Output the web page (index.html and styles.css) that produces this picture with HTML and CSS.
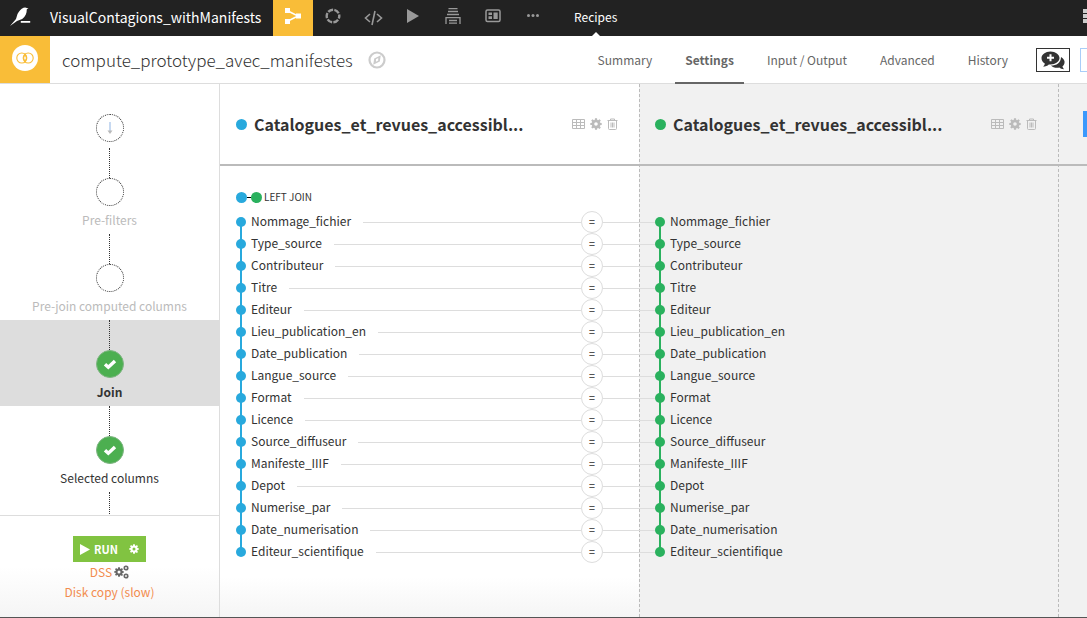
FILE: index.html
```html
<!DOCTYPE html>
<html lang="en">
<head>
<meta charset="utf-8">
<title>compute_prototype_avec_manifestes</title>
<link rel="stylesheet" href="styles.css">
</head>
<body>
<svg class="sprite" aria-hidden="true">
  <symbol id="i-gear" viewBox="0 0 12 12"><path fill-rule="evenodd" d="M5 .3h2l.3 1.6.8.4 1.4-1 1.3 1.3-1 1.4.4.8 1.5.3v1.9l-1.5.3-.4.9 1 1.3-1.3 1.4-1.4-.9-.8.3L7 11.7H5l-.3-1.7-.8-.3-1.4.9-1.3-1.4 1-1.3-.4-.9L.3 7V5.100l1.500-.3.4-.8-1-1.400L2.500 1.300l1.400 1 .8-.4zM6 4.200a1.800 1.800 0 1 0 0 3.600 1.800 1.800 0 0 0 0-3.600z"/></symbol>
  <symbol id="i-table" viewBox="0 0 13 12"><path d="M.5 1.500h12v9H.5zM.5 4.500h12M.5 7.500h12M4.500 1.500v9M8.500 1.500v9" fill="none" stroke="currentColor"/></symbol>
  <symbol id="i-trash" viewBox="0 0 11 12"><path d="M.5 2.500h10M3.500 2.500v-1.500h4v1.500M1.500 2.500v8q0 1 1 1h6q1 0 1-1v-8M4 4.500v5M5.500 4.500v5M7 4.500v5" fill="none" stroke="currentColor"/></symbol>
  <symbol id="i-check" viewBox="0 0 14 14"><path d="M2 7.300l3.300 3 6.700-6.300" fill="none" stroke="#fff" stroke-width="3.400"/></symbol>
</svg>
<div class="app">
  <header class="topbar">
    <a class="logo" href="#" aria-label="Home"><svg width="21" height="20" viewBox="0 0 21 20" fill="#fff"><path d="M0 19l6-7 1.500-5C9 4 11 2 13.500.8q2-.8 3.300.2l1.700.4-1.700.9c0 4-1.300 7.500-4.600 9.700L7 14zM10.800 14h9.400v1.800h-9.400z"/></svg></a>
    <a class="project" href="#">VisualContagions_withManifests</a>
    <nav class="tools" aria-label="Project">
      <a class="tool tool-on" href="#" aria-label="Flow"><svg width="16" height="16" viewBox="0 0 16 16" fill="#fff"><path d="M0 0h5v5H0zM0 11h5v5H0zM11 5.500h5v5h-5z"/><path d="M3 3l10 5-10 5" fill="none" stroke="#fff" stroke-width="1.500"/></svg></a>
      <a class="tool" href="#" aria-label="Lab"><svg width="16" height="16" viewBox="0 0 16 16"><circle cx="8" cy="8" r="6.300" fill="none" stroke="currentColor" stroke-width="2.400" stroke-dasharray="5.300 1.298" stroke-dashoffset="2.650"/></svg></a>
      <a class="tool" href="#" aria-label="Code"><svg class="low" width="19" height="16" viewBox="0 0 19 16" fill="none" stroke="currentColor" stroke-width="1.600"><path d="M6 4L1.500 8 6 12M13 4l4.500 4-4.500 4M11 1L8 15"/></svg></a>
      <a class="tool" href="#" aria-label="Run"><svg width="12" height="16" viewBox="0 0 12 16" fill="currentColor"><path d="M0 1l12 7-12 7z"/></svg></a>
      <a class="tool" href="#" aria-label="Jobs"><svg width="16" height="16" viewBox="0 0 16 16" fill="none" stroke="currentColor" stroke-width="1.300"><path d="M3.500.700h9M3 3.500h10M2 6.500h12M1 16v-6.300h14V16M4 12.500h8M4 15.200h8"/></svg></a>
      <a class="tool" href="#" aria-label="Dashboards"><svg width="16" height="16" viewBox="0 0 16 16"><rect x="1" y="2" width="14" height="11.500" rx="1.500" fill="none" stroke="currentColor" stroke-width="1.500"/><path d="M3.500 4.500H7v2.400H3.500zM3.500 8.300H7v2.700H3.500zM8.500 4.500h4.200V11H8.500z" fill="currentColor"/></svg></a>
      <a class="tool" href="#" aria-label="More"><svg width="14" height="16" viewBox="0 0 14 16" fill="currentColor"><circle cx="2.500" cy="7.500" r="1.500"/><circle cx="7" cy="7.500" r="1.500"/><circle cx="11.500" cy="7.500" r="1.500"/></svg></a>
    </nav>
    <a class="section" href="#">Recipes</a>
    <button class="apps" aria-label="Applications"><svg width="4" height="14" viewBox="0 0 4 14" fill="#ccc"><path d="M0 0h4v4H0zM0 5h4v4H0zM0 10h4v4H0z"/></svg></button>
  </header>

  <div class="titlebar">
    <div class="kind"><svg width="26" height="26" viewBox="0 0 26 26"><circle cx="13" cy="13" r="13" fill="#fff"/><g fill="none" stroke="#f9bd38" stroke-width="1.100"><circle cx="9.800" cy="13" r="5"/><circle cx="16.200" cy="13" r="5"/><path d="M13 9.300l1.500 3.700-1.500 3.700-1.500-3.700z"/></g></svg></div>
    <h1 class="title">compute_prototype_avec_manifestes</h1>
    <svg class="compass" width="18" height="18" viewBox="0 0 18 18"><circle cx="9" cy="9" r="7.500" fill="none" stroke="#ccc" stroke-width="2.200"/><path d="M12.800 4.300L11.800 10.500 5.200 13.700l1-6.200zM8 8.200v2.500l2.200-1.200V7z" fill="#ccc" fill-rule="evenodd"/></svg>
    <nav class="tabs" aria-label="Recipe">
      <a class="tab" href="#">Summary</a>
      <a class="tab tab-on" href="#">Settings</a>
      <a class="tab" href="#">Input / Output</a>
      <a class="tab" href="#">Advanced</a>
      <a class="tab" href="#">History</a>
    </nav>
    <button class="discuss" aria-label="Discussions"><svg width="24" height="20" viewBox="0 0 24 20" fill="#333"><path d="M20 6c2.500 1.500 4 3.500 3.500 6-.3 1.500-1 2.500-2 3.300.2 1.300.8 2 1.500 2.900-2 0-3.500-.6-4.600-1.600-3.500.6-6.800-.2-8.400-2.100C15.500 14.500 20 12 20 6z"/><path d="M9.500.500C14.500.500 18.500 3.500 18.500 7s-4 6.500-9 6.500l-1.700-.1C6.500 14.700 4.500 15.500 2 15.600c1-.8 1.700-1.800 1.800-3.100C1.800 11.300.5 9.300.5 7 .5 3.500 4.500.500 9.500.500z"/><path d="M9.500 3.200v7M6 6.700h7" stroke="#fff" stroke-width="2"/></svg></button>
    <button class="save" aria-label="Save"></button>
  </div>

  <div class="body">
    <aside class="side">
      <ol class="steps">
        <li class="step step-first"><span class="node"><svg width="8" height="14" viewBox="0 0 8 14"><path d="M4 1v9" stroke="#b5cdec" stroke-width="1.500"/><path d="M1.500 9.500h5L4 13z" fill="#b9b9b9"/></svg></span></li>
        <li class="step"><span class="node"></span><span class="label">Pre-filters</span></li>
        <li class="step"><span class="node"></span><span class="label">Pre-join computed columns</span></li>
        <li class="step step-on"><span class="node done"><svg width="14" height="14"><use href="#i-check"/></svg></span><span class="label">Join</span></li>
        <li class="step step-ok"><span class="node done"><svg width="14" height="14"><use href="#i-check"/></svg></span><span class="label">Selected columns</span></li>
        <li class="step"></li>
      </ol>
      <div class="runbox">
        <button class="run"><svg width="10" height="11" viewBox="0 0 10 11" fill="#fff"><path d="M0 0l10 5.500L0 11z"/></svg>RUN<svg class="rungear" width="10" height="10" fill="#fff"><use href="#i-gear"/></svg></button>
        <a class="engine" href="#">DSS <svg width="15" height="14" viewBox="0 0 15 14" fill="#666"><use href="#i-gear" x="0" y="2" width="10" height="10"/><use href="#i-gear" x="9" y="0" width="6" height="6"/><use href="#i-gear" x="9" y="8" width="6" height="6"/></svg></a>
        <a class="engine" href="#">Disk copy (slow)</a>
      </div>
    </aside>

    <main class="canvas">
      <section class="input">
        <header class="inhead"><i class="dot big"></i><h2 class="inname">Catalogues_et_revues_accessibl...</h2>
          <button class="act" aria-label="Explore"><svg width="13" height="12"><use href="#i-table"/></svg></button><button class="act" aria-label="Settings"><svg width="12" height="12"><use href="#i-gear"/></svg></button><button class="act" aria-label="Delete"><svg width="11" height="12"><use href="#i-trash"/></svg></button></header>
      </section>
      <section class="input input-right">
        <header class="inhead"><i class="dot big green"></i><h2 class="inname">Catalogues_et_revues_accessibl...</h2>
          <button class="act" aria-label="Explore"><svg width="13" height="12"><use href="#i-table"/></svg></button><button class="act" aria-label="Settings"><svg width="12" height="12"><use href="#i-gear"/></svg></button><button class="act" aria-label="Delete"><svg width="11" height="12"><use href="#i-trash"/></svg></button></header>
      </section>
      <section class="input input-right input-add">
        <header class="inhead"><button class="add" aria-label="Add input"></button></header>
      </section>
      <div class="join">
        <button class="jointype"><i class="dot big"></i><i class="link"></i><i class="dot big green"></i>LEFT JOIN</button>
        <ul class="conds" id="conds"></ul>
      </div>
    </main>
  </div>
</div>
<script src="app.js"></script>
</body>
</html>
```
FILE: app.js
```js
const columns = [
  "Nommage_fichier", "Type_source", "Contributeur", "Titre", "Editeur",
  "Lieu_publication_en", "Date_publication", "Langue_source", "Format", "Licence",
  "Source_diffuseur", "Manifeste_IIIF", "Depot", "Numerise_par",
  "Date_numerisation", "Editeur_scientifique"
];

document.getElementById("conds").innerHTML = columns.map(name => `
  <li class="cond">
    <span class="side-l"><i class="dot"></i><span class="col">${name}</span><i class="wire"></i><button class="op" aria-label="Equals">=</button><i class="wire short"></i></span>
    <span class="side-r"><i class="dot green"></i><span class="col">${name}</span></span>
  </li>`).join("");
```
FILE: styles.css
```css
* { box-sizing: border-box; }
body {
  margin: 0;
  background: #333;
  color: #333;
  font: 12px/20px "Noto Sans CJK SC", "Noto Sans", sans-serif;
}
a { color: inherit; text-decoration: none; }
button { font: inherit; color: inherit; border: 0; padding: 0; background: none; }
h1, h2, ul, ol { margin: 0; padding: 0; list-style: none; }
svg { display: block; flex: none; }
.sprite { position: absolute; width: 0; height: 0; }

.app {
  display: flex;
  flex-direction: column;
  height: 100vh;
  border-bottom: 1px solid #555;
  overflow: hidden;
}

.topbar { display: flex; align-items: center; height: 36px; flex: none; background: #222; color: #fff; }
.logo { padding: 0 19px 2px 10px; }
.project { width: 223px; padding-bottom: 3px; font-size: 14px; white-space: nowrap; }
.tools { display: flex; align-self: stretch; color: #999; }
.tool { width: 40px; padding-bottom: 5px; display: flex; align-items: center; justify-content: center; }
.tool-on { background: #f9bd38; }
.low { margin-top: 4px; }
.section { display: flex; align-items: center; align-self: stretch; margin-left: 21px; padding-bottom: 3px; position: relative; }
.section::after {
  content: "";
  position: absolute;
  bottom: 0;
  left: 50%;
  margin-left: -4px;
  border: 4px solid transparent;
  border-top: 0;
  border-bottom-color: #fff;
}
.apps { margin-left: auto; padding-bottom: 4px; }

.titlebar { display: flex; align-items: center; height: 48px; flex: none; background: #fff; border-bottom: 1px solid #ddd; }
.kind { width: 50px; align-self: stretch; padding: 9px 12px; background: #f9bd38; }
.title { margin-left: 12px; font-size: 17px; font-weight: 300; line-height: 24px; }
.compass { margin-left: 15px; }
.tabs { display: flex; align-self: stretch; margin: 0 18px -1px auto; color: #666; }
.tab { padding: 14px 10px 0; margin-left: 13px; }
.tab-on { font-weight: 700; border-bottom: 2px solid #666; }
.discuss { width: 34px; height: 24px; border: 1px solid #333; padding: 2px 4px; }
.save { width: 7px; height: 24px; margin-left: 10px; border: 1px solid #a9cdf8; border-right: 0; }

.body { display: flex; flex: 1; min-height: 0; background: #fff; }
.side { width: 220px; flex: none; display: flex; flex-direction: column; border-right: 1px solid #ddd; }
.steps { flex: 1; min-height: 0; overflow: hidden; }
.step { display: flex; flex-direction: column; align-items: center; height: 86px; color: #bbb; }
.step::before { content: ""; height: 30px; border-left: 1px dotted #333; }
.step-first { height: 64px; }
.step-first::before { border-color: transparent; }
.step-on { background: #ddd; color: #333; font-weight: 700; }
.step-ok { color: #333; }
.node { width: 28px; height: 28px; display: flex; align-items: center; justify-content: center; border: 1px dotted #333; border-radius: 50%; background: #fff; }
.done { background: #4caf50; border: 1px solid #7fb582; }
.label { padding-top: 4px; }
.runbox { height: 102px; border-top: 1px solid #ddd; padding-top: 20px; display: flex; flex-direction: column; align-items: center; background: linear-gradient(#fff 50%, #f5f5f5); }
.run { width: 73px; height: 26px; padding-left: 7px; display: flex; align-items: center; gap: 4px; background: #81c341; color: #fff; font-size: 11px; font-weight: 700; }
.rungear { margin-left: 7px; }
.engine { display: flex; align-items: center; gap: 2px; color: #f28c4f; }

.canvas {
  flex: 1;
  min-width: 0;
  overflow: hidden;
  display: grid;
  grid-template-columns: 419px 419px 1fr;
  grid-template-rows: 82px 1fr;
}
.input { grid-row: 1 / 3; grid-column: 1; background: linear-gradient(#fff calc(100% - 40px), #f5f5f5); }
.input-right { grid-column: 2; background: #f1f1f1; border-left: 1px dashed #bbb; }
.input-add { grid-column: 3; }
.inhead { height: 82px; display: flex; align-items: center; padding: 0 21px 0 16px; border-bottom: 2px solid #bbb; }
.input-right .inhead { padding-left: 15px; }
.input-add .inhead { padding: 0; justify-content: flex-end; }
.inname { margin: 0 auto 0 7px; font-size: 16px; font-weight: 700; line-height: 24px; white-space: nowrap; }
.act { margin-left: 5px; color: #bbb; fill: #bbb; }
.add { width: 4px; height: 26px; background: #3b99fc; }

.dot { flex: none; width: 10px; height: 10px; border-radius: 50%; background: #28a9dd; position: relative; }
.big { width: 11px; height: 11px; }
.green { background: #2ab15e; }

.join { grid-row: 2; grid-column: 1 / 3; padding: 21px 0 0 16px; }
.jointype { display: flex; align-items: center; font-size: 10px; }
.link { width: 4px; height: 1px; background: #000; }
.jointype .green { margin-right: 2px; }
.conds { padding-top: 4px; }
.cond { display: flex; height: 22px; }
.side-l, .side-r { display: flex; align-items: center; position: relative; }
.side-l { width: 419px; }
.side-l::before, .side-r::before {
  content: "";
  position: absolute;
  left: 4px;
  top: 0;
  bottom: 0;
  width: 2px;
  background: #28a9dd;
}
.side-r::before { background: #2ab15e; }
.cond:first-child ::before { top: 11px; }
.cond:last-child ::before { bottom: 11px; }
.col { margin-left: 5px; padding-bottom: 2px; }
.wire { flex: 1; height: 1px; margin-left: 12px; background: #ddd; }
.short { flex: none; width: 52px; margin-left: 0; }
.op { width: 22px; height: 22px; border: 1px solid #ddd; border-radius: 50%; background: #fff; color: #555; font-size: 10px; line-height: 20px; font-weight: 700; }
```
